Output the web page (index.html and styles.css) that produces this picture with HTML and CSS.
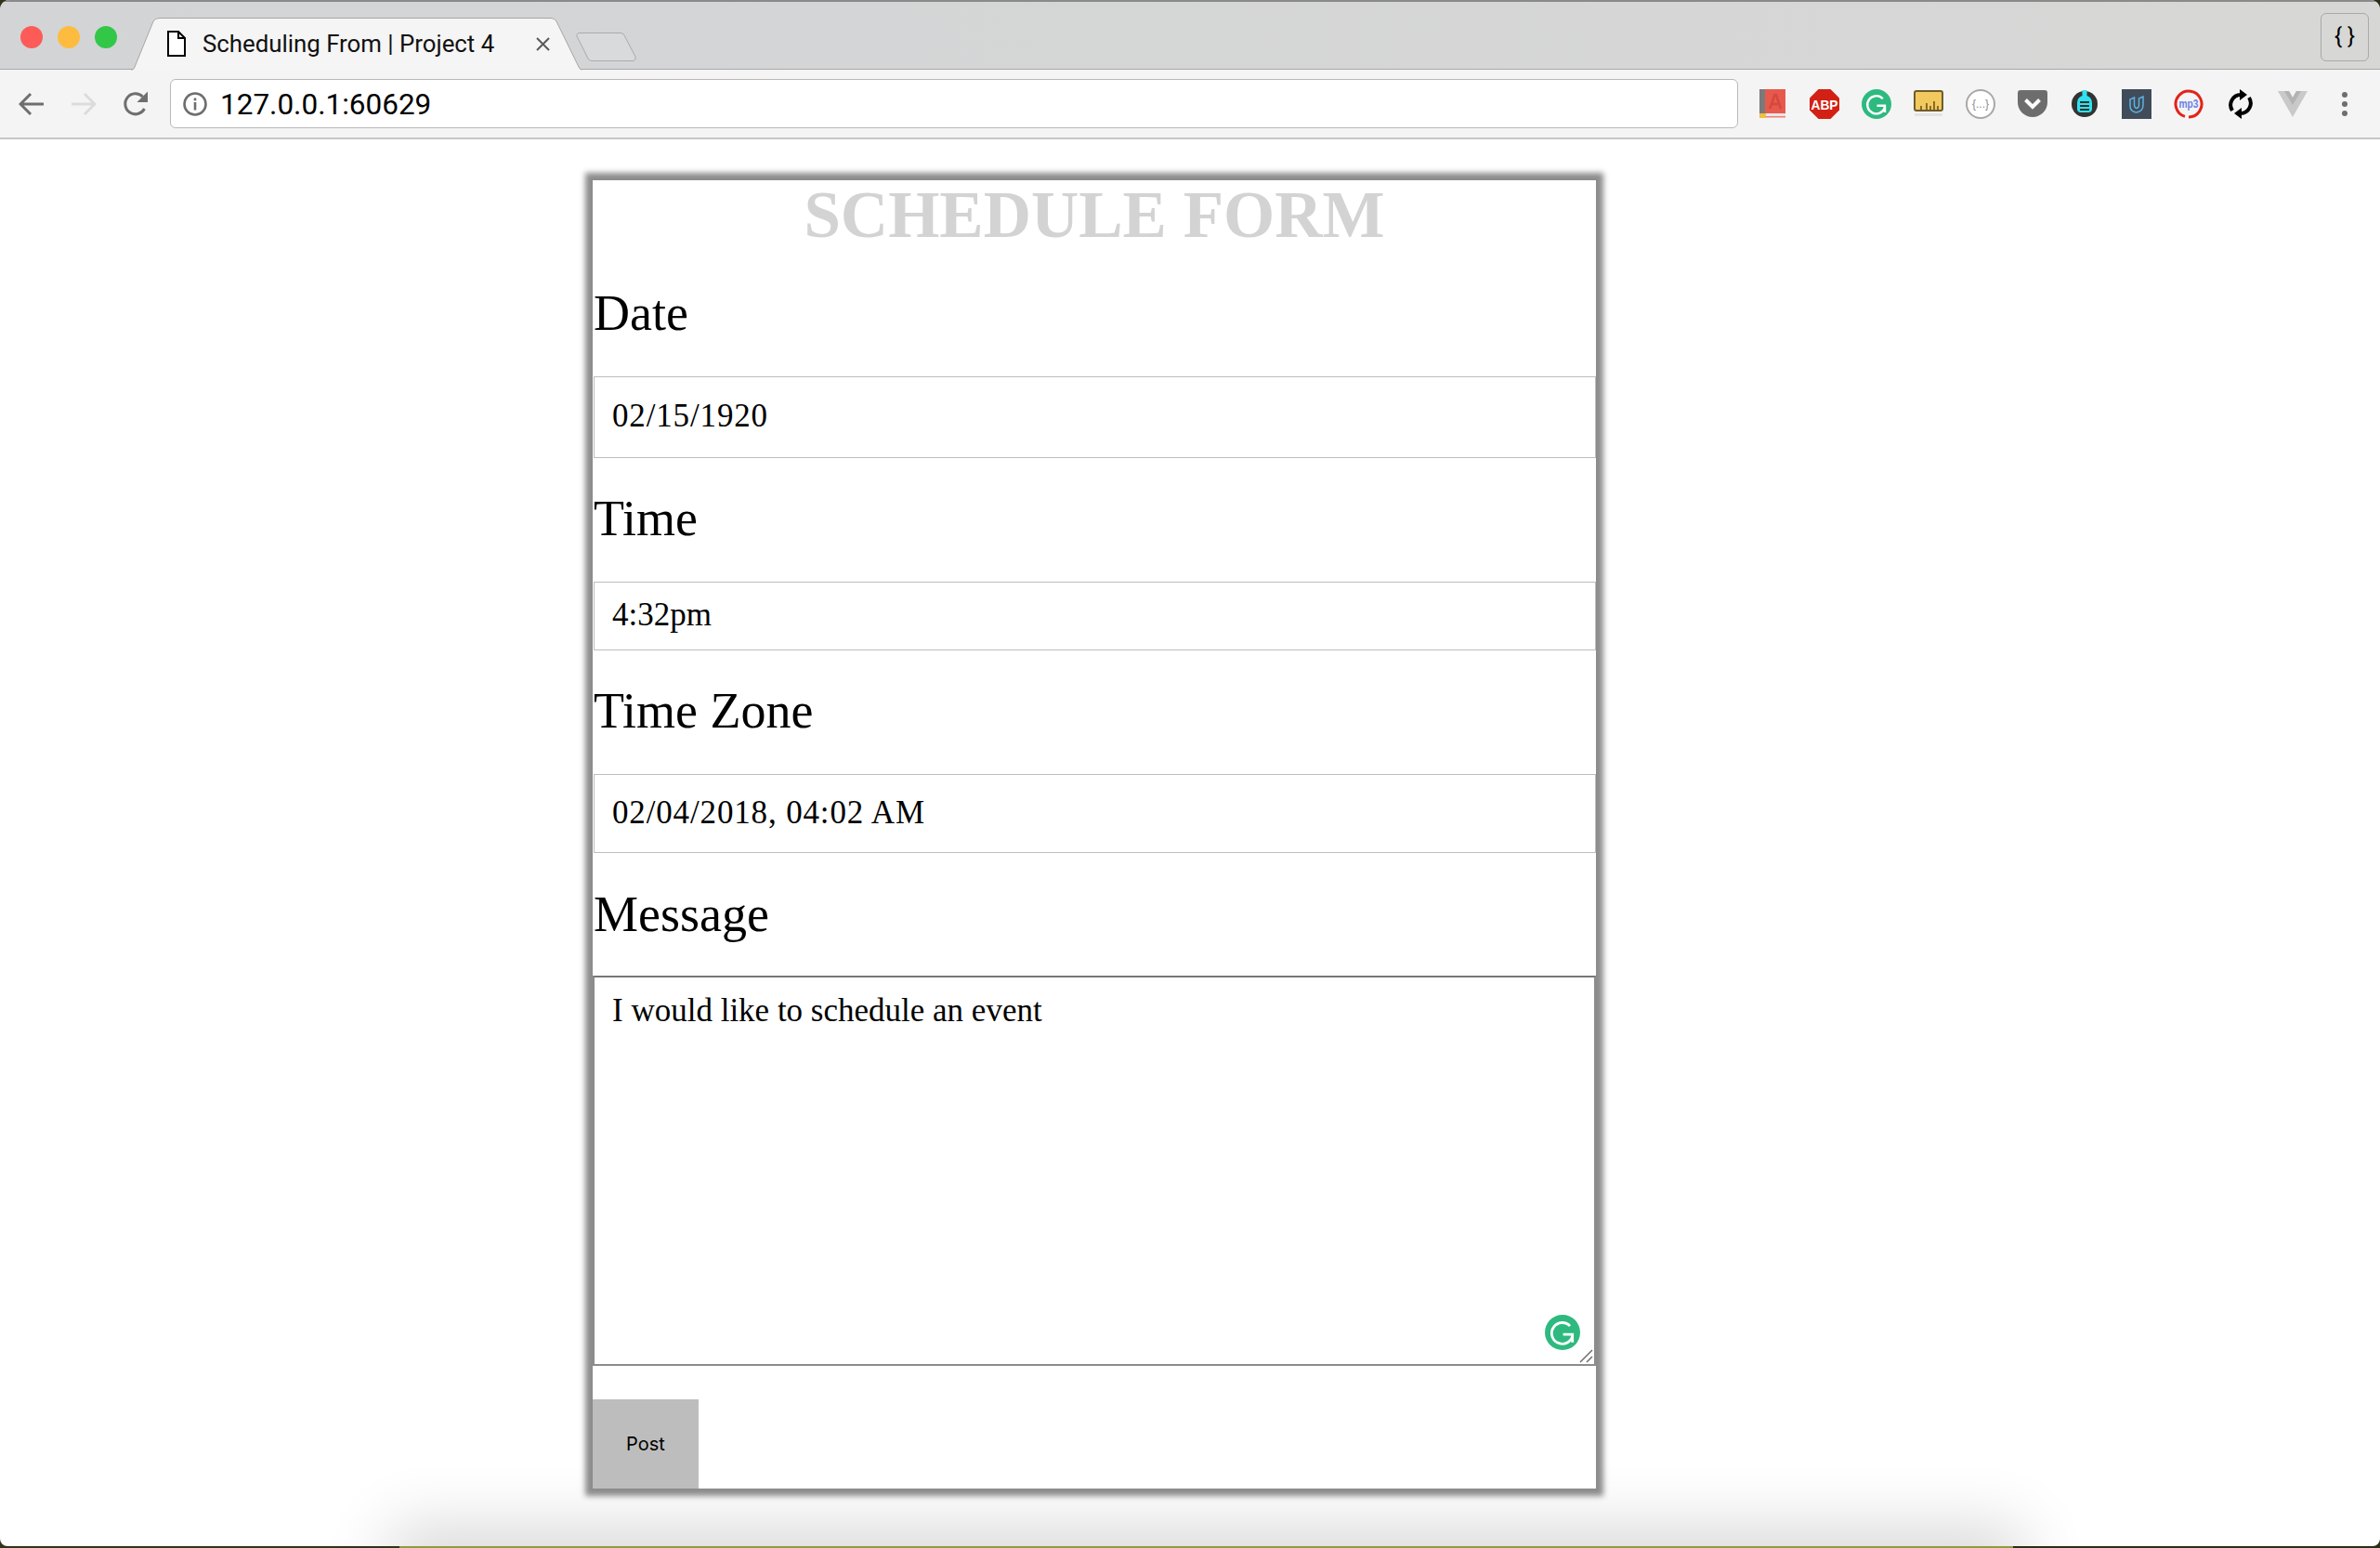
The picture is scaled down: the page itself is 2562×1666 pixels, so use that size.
FILE: index.html

```html
<!DOCTYPE html>
<html lang="en">
<head>
  <meta charset="UTF-8" />
  <title>Scheduling From | Project 4</title>
  <link rel="stylesheet" href="styles.css">
</head>
<body>
  <svg class="defs" width="0" height="0">
    <symbol id="grammarly" viewBox="0 0 32 32">
      <circle cx="16" cy="16" r="16" fill="#2eb97f" />
      <path d="M22.8 10.2A9.6 9.6 0 1 0 25 19.5" fill="none" stroke="#fff" stroke-width="2.4" />
      <path d="M16.5 17.8H25V25" fill="none" stroke="#fff" stroke-width="2.4" />
    </symbol>
  </svg>

  <div class="window">
    <div class="tabstrip">
      <div class="lights">
        <span class="light red"></span>
        <span class="light yellow"></span>
        <span class="light green"></span>
      </div>
      <div class="tab">
        <svg class="tab-shape" width="486" height="57" viewBox="0 0 486 57">
          <path d="M0 56H1Q3 56 4 53L24 4Q26 0.5 30 0.5H452Q456 0.5 458 4L482 53Q483 56 486 56" fill="#f5f5f5" stroke="#a6a6a6" />
        </svg>
        <svg class="doc-icon" width="20" height="28" viewBox="0 0 20 28">
          <path d="M1 1H12L19 8V27H1Z M12 1V8H19" fill="#fff" stroke="#000" stroke-width="2" />
        </svg>
        <span class="tab-title">Scheduling From | Project 4</span>
        <svg class="tab-close" width="15" height="15" viewBox="0 0 15 15">
          <path d="M1 1L14 14M14 1L1 14" stroke="#5a5a5a" stroke-width="2" />
        </svg>
      </div>
      <svg class="new-tab" width="65" height="31" viewBox="0 0 65 31">
        <path d="M5 .5H48Q51 .5 52 3L64 26Q65 30 61 30.500H17Q14 30.500 13 28L1 4Q0 .5 5 .5Z" fill="#d9dadb" stroke="#ababab" />
      </svg>
      <div class="devtools-btn">{ }</div>
    </div>

    <div class="toolbar">
      <div class="nav">
        <svg width="28" height="26" viewBox="0 0 28 26"><path d="M27 13H3M13 2L2 13L13 24" fill="none" stroke="#6e6e6e" stroke-width="3" /></svg>
        <svg width="28" height="26" viewBox="0 0 28 26"><path d="M1 13H25M15 2L26 13L15 24" fill="none" stroke="#dcdcdc" stroke-width="3" /></svg>
        <svg width="28" height="28" viewBox="0 0 28 28">
          <path d="M23.500 19A11 11 0 1 1 21.500 6" fill="none" stroke="#6e6e6e" stroke-width="3" />
          <path d="M27 0.500V12H15.500Z" fill="#6e6e6e" />
        </svg>
      </div>
      <div class="address">
        <svg width="26" height="26" viewBox="0 0 26 26">
          <circle cx="13" cy="13" r="11.500" fill="none" stroke="#6e6e6e" stroke-width="2.600" />
          <rect x="11.700" y="11" width="2.600" height="8.500" fill="#6e6e6e" />
          <rect x="11.700" y="6.500" width="2.600" height="2.800" fill="#6e6e6e" />
        </svg>
        <span class="url">127.0.0.1:60629</span>
      </div>
      <div class="extensions">
        <div class="ext">
          <svg width="28" height="31" viewBox="0 0 28 31">
            <rect x="6" width="22" height="26" fill="#e8594d" />
            <rect width="6" height="29" fill="#7a7a7a" />
            <path d="M11 21L16.500 6H18L23 21M13 16H21" fill="none" stroke="#d4483d" stroke-width="2.500" />
            <rect x="6" y="26" width="22" height="3" fill="#e6e6e6" />
            <rect x="6" y="29" width="22" height="1.500" fill="#ec7f76" />
            <rect y="26" width="7" height="5" fill="#eec03f" />
          </svg>
        </div>
        <div class="ext">
          <svg width="32" height="32" viewBox="0 0 32 32">
            <path d="M9.500 0H22.500L32 9.500V22.500L22.500 32H9.500L0 22.500V9.500Z" fill="#d32015" />
            <text class="abp-text" x="16" y="21.500" text-anchor="middle" textLength="29" lengthAdjust="spacingAndGlyphs">ABP</text>
          </svg>
        </div>
        <div class="ext"><svg width="32" height="32"><use href="#grammarly" /></svg></div>
        <div class="ext">
          <svg width="32" height="29" viewBox="0 0 32 29">
            <rect x="1" y="1" width="30" height="21" rx="2" fill="#f2c95f" stroke="#6f5c2b" stroke-width="2" />
            <path d="M8 21V17M14 21V14M18 21V17M22 21V12M26 21V17" stroke="#8a6a28" stroke-width="2" />
            <rect x="1" y="25" width="30" height="3" fill="#e4e4e4" />
          </svg>
        </div>
        <div class="ext">
          <svg width="32" height="32" viewBox="0 0 32 32">
            <circle cx="16" cy="16" r="15" fill="#fff" stroke="#a8a8a8" stroke-width="2" />
            <text class="brace-text" x="16" y="20" text-anchor="middle">{...}</text>
          </svg>
        </div>
        <div class="ext">
          <svg width="32" height="29" viewBox="0 0 32 29">
            <path d="M0 3Q0 0 3 0H29Q32 0 32 3V13A16 16 0 0 1 0 13Z" fill="#6d6d6d" />
            <path d="M8.500 10.500L16 18L23.500 10.500" fill="none" stroke="#fff" stroke-width="4" />
          </svg>
        </div>
        <div class="ext">
          <svg width="28" height="29" viewBox="0 0 28 29">
            <circle cx="14" cy="15" r="14" fill="#333" />
            <path d="M11.500 0H16.500V6Q22 8 22 14V20Q22 24 18 24H10Q6 24 6 20V14Q6 8 11.500 6Z" fill="#2fe3ee" />
            <path d="M9 13H19M9 17H19M9 21H19" stroke="#333" stroke-width="1.800" />
          </svg>
        </div>
        <div class="ext">
          <svg width="32" height="32" viewBox="0 0 32 32">
            <rect width="32" height="32" fill="#414c5a" />
            <path d="M9 11V18Q9 24 15.500 25Q23 24 23 17V8L18.500 10V17Q18.500 20 16 20.500Q13.500 20 13.500 17V9Z" fill="none" stroke="#5cb2e0" stroke-width="1.500" />
          </svg>
        </div>
        <div class="ext">
          <svg width="32" height="32" viewBox="0 0 32 32">
            <path d="M16 30A14 14 0 1 0 12 29.400" fill="none" stroke="#e2231a" stroke-width="3" />
            <text class="mp3-text" x="16" y="20" text-anchor="middle" textLength="21" lengthAdjust="spacingAndGlyphs">mp3</text>
          </svg>
        </div>
        <div class="ext">
          <svg width="28" height="32" viewBox="0 0 28 32">
            <path d="M5 23A11 11 0 0 1 14 6" fill="none" stroke="#000" stroke-width="4" />
            <path d="M23 9A11 11 0 0 1 14 26" fill="none" stroke="#000" stroke-width="4" />
            <path d="M13 0L21 6L13 12Z M15 20L7 26L15 32Z" fill="#000" />
          </svg>
        </div>
        <div class="ext">
          <svg width="32" height="28" viewBox="0 0 32 28">
            <path d="M0 0H12L16 7L20 0H32L16 28Z" fill="#c9c9c9" />
            <path d="M7 0H12L16 7L20 0H25L16 15Z" fill="#b3b3b3" />
          </svg>
        </div>
        <div class="ext dots"><span></span><span></span><span></span></div>
      </div>
    </div>

    <div class="page">
      <div class="dock-shadow"></div>
      <form class="card">
        <h1>SCHEDULE FORM</h1>
        <label class="date-label">Date</label>
        <div class="field field-date tall">02/15/1920</div>
        <label>Time</label>
        <div class="field short">4:32pm</div>
        <label>Time Zone</label>
        <div class="field field-date mid">02/04/2018, 04:02 AM</div>
        <label class="message-label">Message</label>
        <div class="message">
          I would like to schedule an event
          <svg class="grammarly-badge" width="38" height="38"><use href="#grammarly" /></svg>
          <svg class="resizer" width="15" height="15" viewBox="0 0 15 15">
            <path d="M1 14L14 1M8 14L14 8" stroke="#6e6e6e" stroke-width="1.500" />
          </svg>
        </div>
        <button type="button">Post</button>
      </form>
    </div>
  </div>
</body>
</html>
```

FILE: styles.css

```css
html, body {
  margin: 0;
  height: 1666px;
  overflow: hidden;
}
body {
  background: linear-gradient(to right, #33331a 430px, #8f9c3c 430px, #8f9c3c 2167px, #2c2e16 2167px);
}
.defs {
  display: block;
  height: 0;
}
.window {
  display: flex;
  flex-direction: column;
  height: 1664px;
  background-color: #fff;
  border-radius: 10px 10px 8px 8px;
  overflow: hidden;
}

/* browser chrome */
.tabstrip {
  display: flex;
  box-sizing: border-box;
  height: 75px;
  border-top: 2px solid #8a8a8a;
  background: linear-gradient(to right, #d3d4d6, #d7d7d6);
  box-shadow: inset 0 -1px 0 #a8a8a8;
}
.lights {
  display: flex;
  gap: 16px;
  padding: 26px 0 0 22px;
}
.light {
  width: 24px;
  height: 24px;
  border-radius: 50%;
}
.red { background-color: #fc5b57; }
.yellow { background-color: #fdbc40; }
.green { background-color: #33c748; }
.tab {
  position: relative;
  display: flex;
  align-items: center;
  box-sizing: border-box;
  width: 486px;
  height: 56px;
  margin: 17px 0 0 15px;
  padding-left: 39px;
  font-family: Roboto, sans-serif;
  font-size: 25.8px;
}
.tab-shape {
  position: absolute;
  top: 0;
  left: 0;
}
.doc-icon, .tab-title, .tab-close {
  position: relative;
}
.tab-title {
  margin-left: 18px;
  color: #111;
}
.tab-close {
  margin-left: 45px;
}
.new-tab {
  margin: 33px 0 0 -7px;
}
.devtools-btn {
  box-sizing: border-box;
  width: 52px;
  height: 52px;
  margin: 12px 12px 0 auto;
  border: 1px solid #a9a9a9;
  border-radius: 6px;
  font-family: Roboto, sans-serif;
  font-size: 24px;
  line-height: 48px;
  text-align: center;
}
.toolbar {
  display: flex;
  align-items: center;
  box-sizing: border-box;
  height: 75px;
  border-bottom: 2px solid #c6c6c6;
  background-color: #f4f4f4;
}
.nav {
  display: flex;
  align-items: center;
  gap: 28px;
  padding-left: 20px;
}
.address {
  display: flex;
  align-items: center;
  gap: 14px;
  box-sizing: border-box;
  width: 1688px;
  height: 53px;
  margin-left: 23px;
  padding-left: 13px;
  border: 1px solid #b9b9b9;
  border-radius: 6px;
  background-color: #fff;
  font-family: Roboto, sans-serif;
  font-size: 31.5px;
  color: #000;
}
.url {
  padding-top: 2px;
}
.extensions {
  display: flex;
  margin-left: 9px;
}
.ext {
  display: flex;
  align-items: center;
  justify-content: center;
  width: 56px;
  height: 40px;
}
.abp-text {
  font-family: "Liberation Sans", sans-serif;
  font-size: 15px;
  font-weight: bold;
  fill: #fff;
}
.brace-text {
  font-family: "Liberation Sans", sans-serif;
  font-size: 12px;
  fill: #8c8c8c;
}
.mp3-text {
  font-family: "Liberation Sans", sans-serif;
  font-size: 13px;
  font-weight: bold;
  fill: #6a7fe6;
}
.dots {
  flex-direction: column;
  gap: 4px;
}
.dots span {
  width: 6px;
  height: 6px;
  border-radius: 50%;
  background-color: #6e6e6e;
}

/* page */
.page {
  position: relative;
  flex: 1;
  overflow: hidden;
  padding-top: 44px;
}
.dock-shadow {
  position: absolute;
  top: 100%;
  left: 440px;
  width: 1717px;
  height: 40px;
  box-shadow: 0 0 70px 20px rgba(0, 0, 0, 0.16);
}
.card {
  position: relative;
  box-sizing: border-box;
  width: 1080px;
  height: 1408px;
  margin-left: 638px;
  box-shadow: 0 0 6px 8px #8c8c8c;
  background-color: #fff;
  font-family: "Liberation Serif", serif;
  color: #000;
}
h1 {
  height: 70px;
  margin: 0;
  font-size: 71px;
  line-height: 74px;
  text-align: center;
  color: #d3d3d3;
}
label {
  display: block;
  margin: 35px 0 38px 1px;
  font-size: 54px;
  line-height: 60px;
}
.date-label {
  margin-top: 43px;
}
.message-label {
  margin: 36px 0 36px 1px;
}
.field {
  display: flex;
  align-items: center;
  box-sizing: border-box;
  margin-left: 1px;
  padding: 0 19px 2px;
  border: 1px solid #bdbdbd;
  font-size: 35px;
}
.field-date {
  letter-spacing: 0.85px;
}
.tall { height: 88px; }
.short { height: 74px; }
.mid { height: 85px; }
.message {
  position: relative;
  box-sizing: border-box;
  height: 420px;
  padding: 16px 19px;
  border: 2px solid #8c8c8c;
  border-top-color: #777;
  font-size: 35px;
  line-height: 40px;
}
.grammarly-badge {
  position: absolute;
  right: 15px;
  bottom: 15px;
}
.resizer {
  position: absolute;
  right: 1px;
  bottom: 1px;
}
button {
  display: block;
  width: 114px;
  height: 96px;
  margin-top: 36px;
  padding: 0;
  border: none;
  background-color: #bdbdbd;
  font-family: Inter, sans-serif;
  font-size: 20px;
  color: #000;
}
```
